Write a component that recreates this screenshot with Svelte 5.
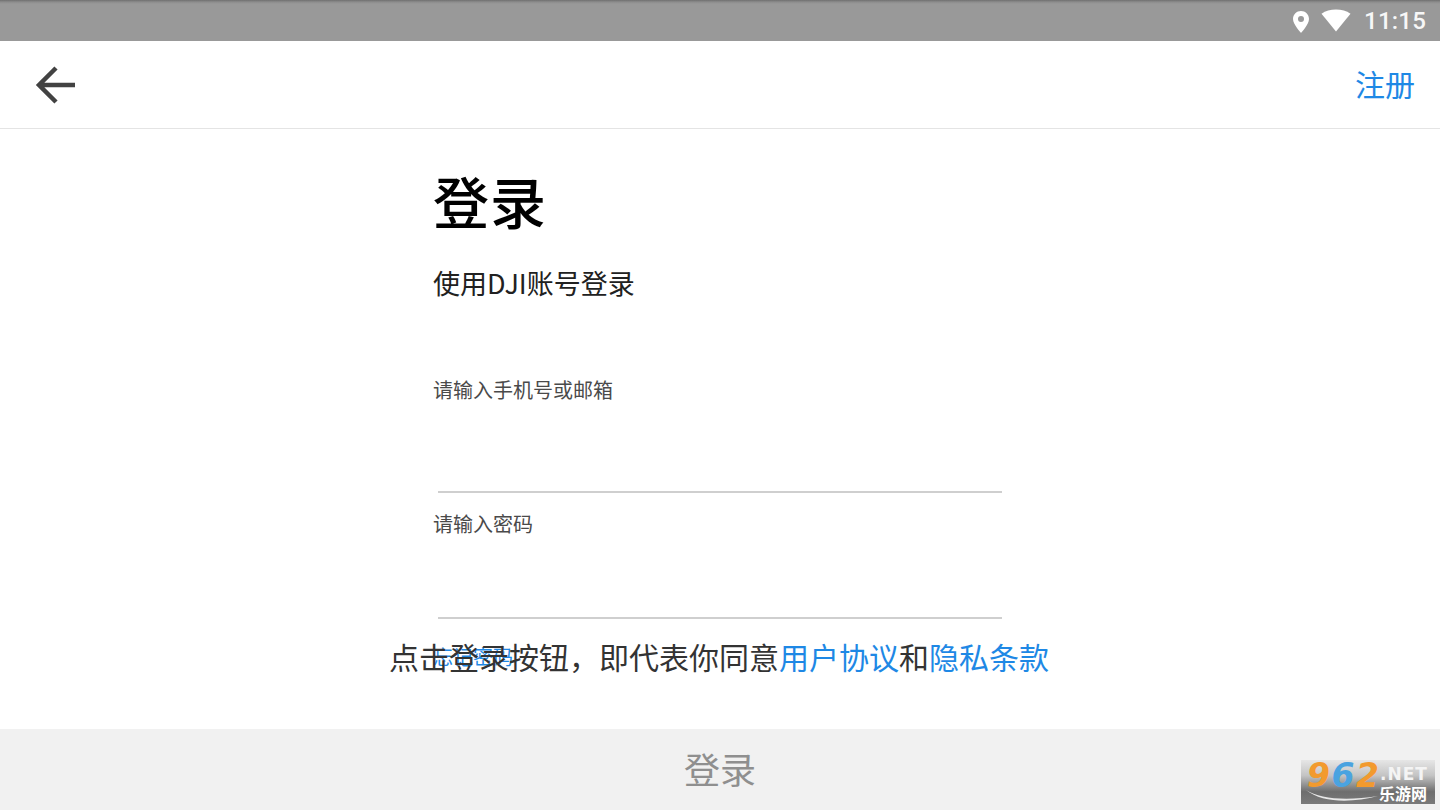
<script lang="ts">
	// login screen, static copy of the tablet layout
	const digits = [
		{ ch: '9', color: '#f29a2e' },
		{ ch: '6', color: '#4aa3e0' },
		{ ch: '2', color: '#f29a2e' }
	];
</script>

<div class="screen">
	<div class="status">
		<svg class="pin" viewBox="0 0 18 24" width="18" height="24"><path fill="#fff" fill-rule="evenodd" d="M9 1C4.600 1 1 4.500 1 9c0 5.500 8 14 8 14s8-8.500 8-14c0-4.500-3.600-8-8-8zm0 11a3 3 0 1 1 0-6 3 3 0 0 1 0 6z"/></svg>
		<svg class="wifi" viewBox="0 0 30 23" width="30" height="23"><path fill="#fff" d="M15 22.500 0.500 4.800C4.500 1.800 9.500 0.500 15 0.500s10.500 1.300 14.500 4.300z"/></svg>
		<span class="time">11:15</span>
	</div>

	<header class="bar">
		<svg class="back" viewBox="0 0 42 42" width="42" height="42"><path fill="none" stroke="#424242" stroke-width="4.500" d="M41 21H6M22 4 5 21l17 17"/></svg>
		<a class="register">注册</a>
	</header>

	<main class="form">
		<h1>登录</h1>
		<p class="sub">使用DJI账号登录</p>
		<label class="field first">
			<span>请输入手机号或邮箱</span>
			<i></i>
		</label>
		<label class="field second">
			<span>请输入密码</span>
			<i></i>
		</label>
		<a class="forgot">忘记密码</a>
		<p class="terms">点击登录按钮，即代表你同意<b>用户协议</b>和<b>隐私条款</b></p>
	</main>

	<button class="submit">登录</button>

	<div class="mark">
		<svg class="swoosh" viewBox="0 0 80 16" width="80" height="16"><path fill="#e8e8e8" d="M2 2c14 9 40 11 72 6C48 15 18 15 2 2z"/></svg>
		<span class="num">{#each digits as d}<em style="color: {d.color}">{d.ch}</em>{/each}</span>
		<span class="net">.NET</span>
		<span class="cn">乐游网</span>
	</div>
</div>

<style>
	:global(body) {
		margin: 0;
		background: #fff;
	}
	.screen {
		position: relative;
		width: 1440px;
		height: 810px;
		display: flex;
		flex-direction: column;
		overflow: hidden;
		font-family: "Noto Sans CJK SC", "Noto Sans", sans-serif;
	}
	.status {
		height: 41px;
		box-sizing: border-box;
		background: linear-gradient(#6f6f6f 0, #8c8c8c 2px, #999 4px);
		display: flex;
		align-items: center;
		justify-content: flex-end;
		padding: 1px 14px 0 0;
		color: #fff;
	}
	.pin {
		margin-right: 11px;
		margin-top: 1px;
	}
	.wifi {
		margin-right: 13px;
		margin-top: -2px;
	}
	.time {
		font-family: Roboto, sans-serif;
		font-size: 24px;
		font-weight: 500;
		letter-spacing: 0.2px;
		opacity: 0.92;
	}
	.bar {
		height: 88px;
		box-sizing: border-box;
		border-bottom: 1px solid #e4e4e4;
		display: flex;
		align-items: center;
		justify-content: space-between;
		padding: 0 25px 0 34px;
	}
	.register {
		font-size: 30px;
		color: #1e88e5;
		line-height: 1;
		margin-top: -4px;
	}
	.form {
		position: relative;
		flex: 1;
		padding-left: 433px;
		display: flex;
		flex-direction: column;
		align-items: flex-start;
	}
	h1 {
		margin: 35px 0 0;
		font-size: 56px;
		font-weight: 500;
		line-height: 72px;
		letter-spacing: 1px;
		color: #000;
	}
	.sub {
		margin: 27px 0 0;
		font-size: 27px;
		line-height: 40px;
		color: #212121;
	}
	.field {
		display: flex;
		flex-direction: column;
		width: 569px;
		font-size: 20px;
		line-height: 30px;
		color: #4a4a4a;
	}
	.field i {
		display: block;
		height: 2px;
		margin-left: 5px;
		width: 564px;
		background: #cfcfcf;
	}
	.first {
		margin-top: 72px;
	}
	.first span {
		margin-bottom: 86px;
	}
	.second {
		margin-top: 16px;
	}
	.second span {
		margin-bottom: 78px;
	}
	.forgot {
		margin-top: 23px;
		font-size: 20px;
		line-height: 30px;
		color: #1e88e5;
	}
	.terms {
		position: absolute;
		left: 389px;
		top: 505px;
		margin: 0;
		font-size: 30px;
		line-height: 44px;
		white-space: nowrap;
		color: #333;
	}
	.terms b {
		font-weight: 400;
		color: #1e88e5;
	}
	.submit {
		height: 81px;
		border: 0;
		padding: 0 0 4px;
		background: #f1f1f1;
		color: #8f8f8f;
		font-family: inherit;
		font-size: 36px;
		line-height: 1;
	}
	.mark {
		position: absolute;
		left: 1301px;
		top: 760px;
		width: 134px;
		height: 44px;
		overflow: hidden;
		background: linear-gradient(#e6e6e6 0, #c4c4c4 35%, #6e6e6e 72%, #7a7a7a 100%);
	}
	.swoosh {
		position: absolute;
		left: 3px;
		top: 28px;
	}
	.num {
		position: absolute;
		left: 6px;
		top: 0;
		font-family: "DejaVu Sans", sans-serif;
		font-size: 33px;
		font-weight: 700;
		line-height: 32px;
		letter-spacing: 1.500px;
	}
	.num em {
		font-style: italic;
	}
	.net {
		position: absolute;
		left: 79px;
		top: 6px;
		font-family: "DejaVu Sans", sans-serif;
		font-size: 17px;
		font-weight: 700;
		line-height: 16px;
		letter-spacing: 1px;
		color: #f4f4f4;
	}
	.cn {
		position: absolute;
		left: 78px;
		top: 24px;
		font-size: 16px;
		font-weight: 700;
		line-height: 18px;
		color: #fff;
	}
</style>
